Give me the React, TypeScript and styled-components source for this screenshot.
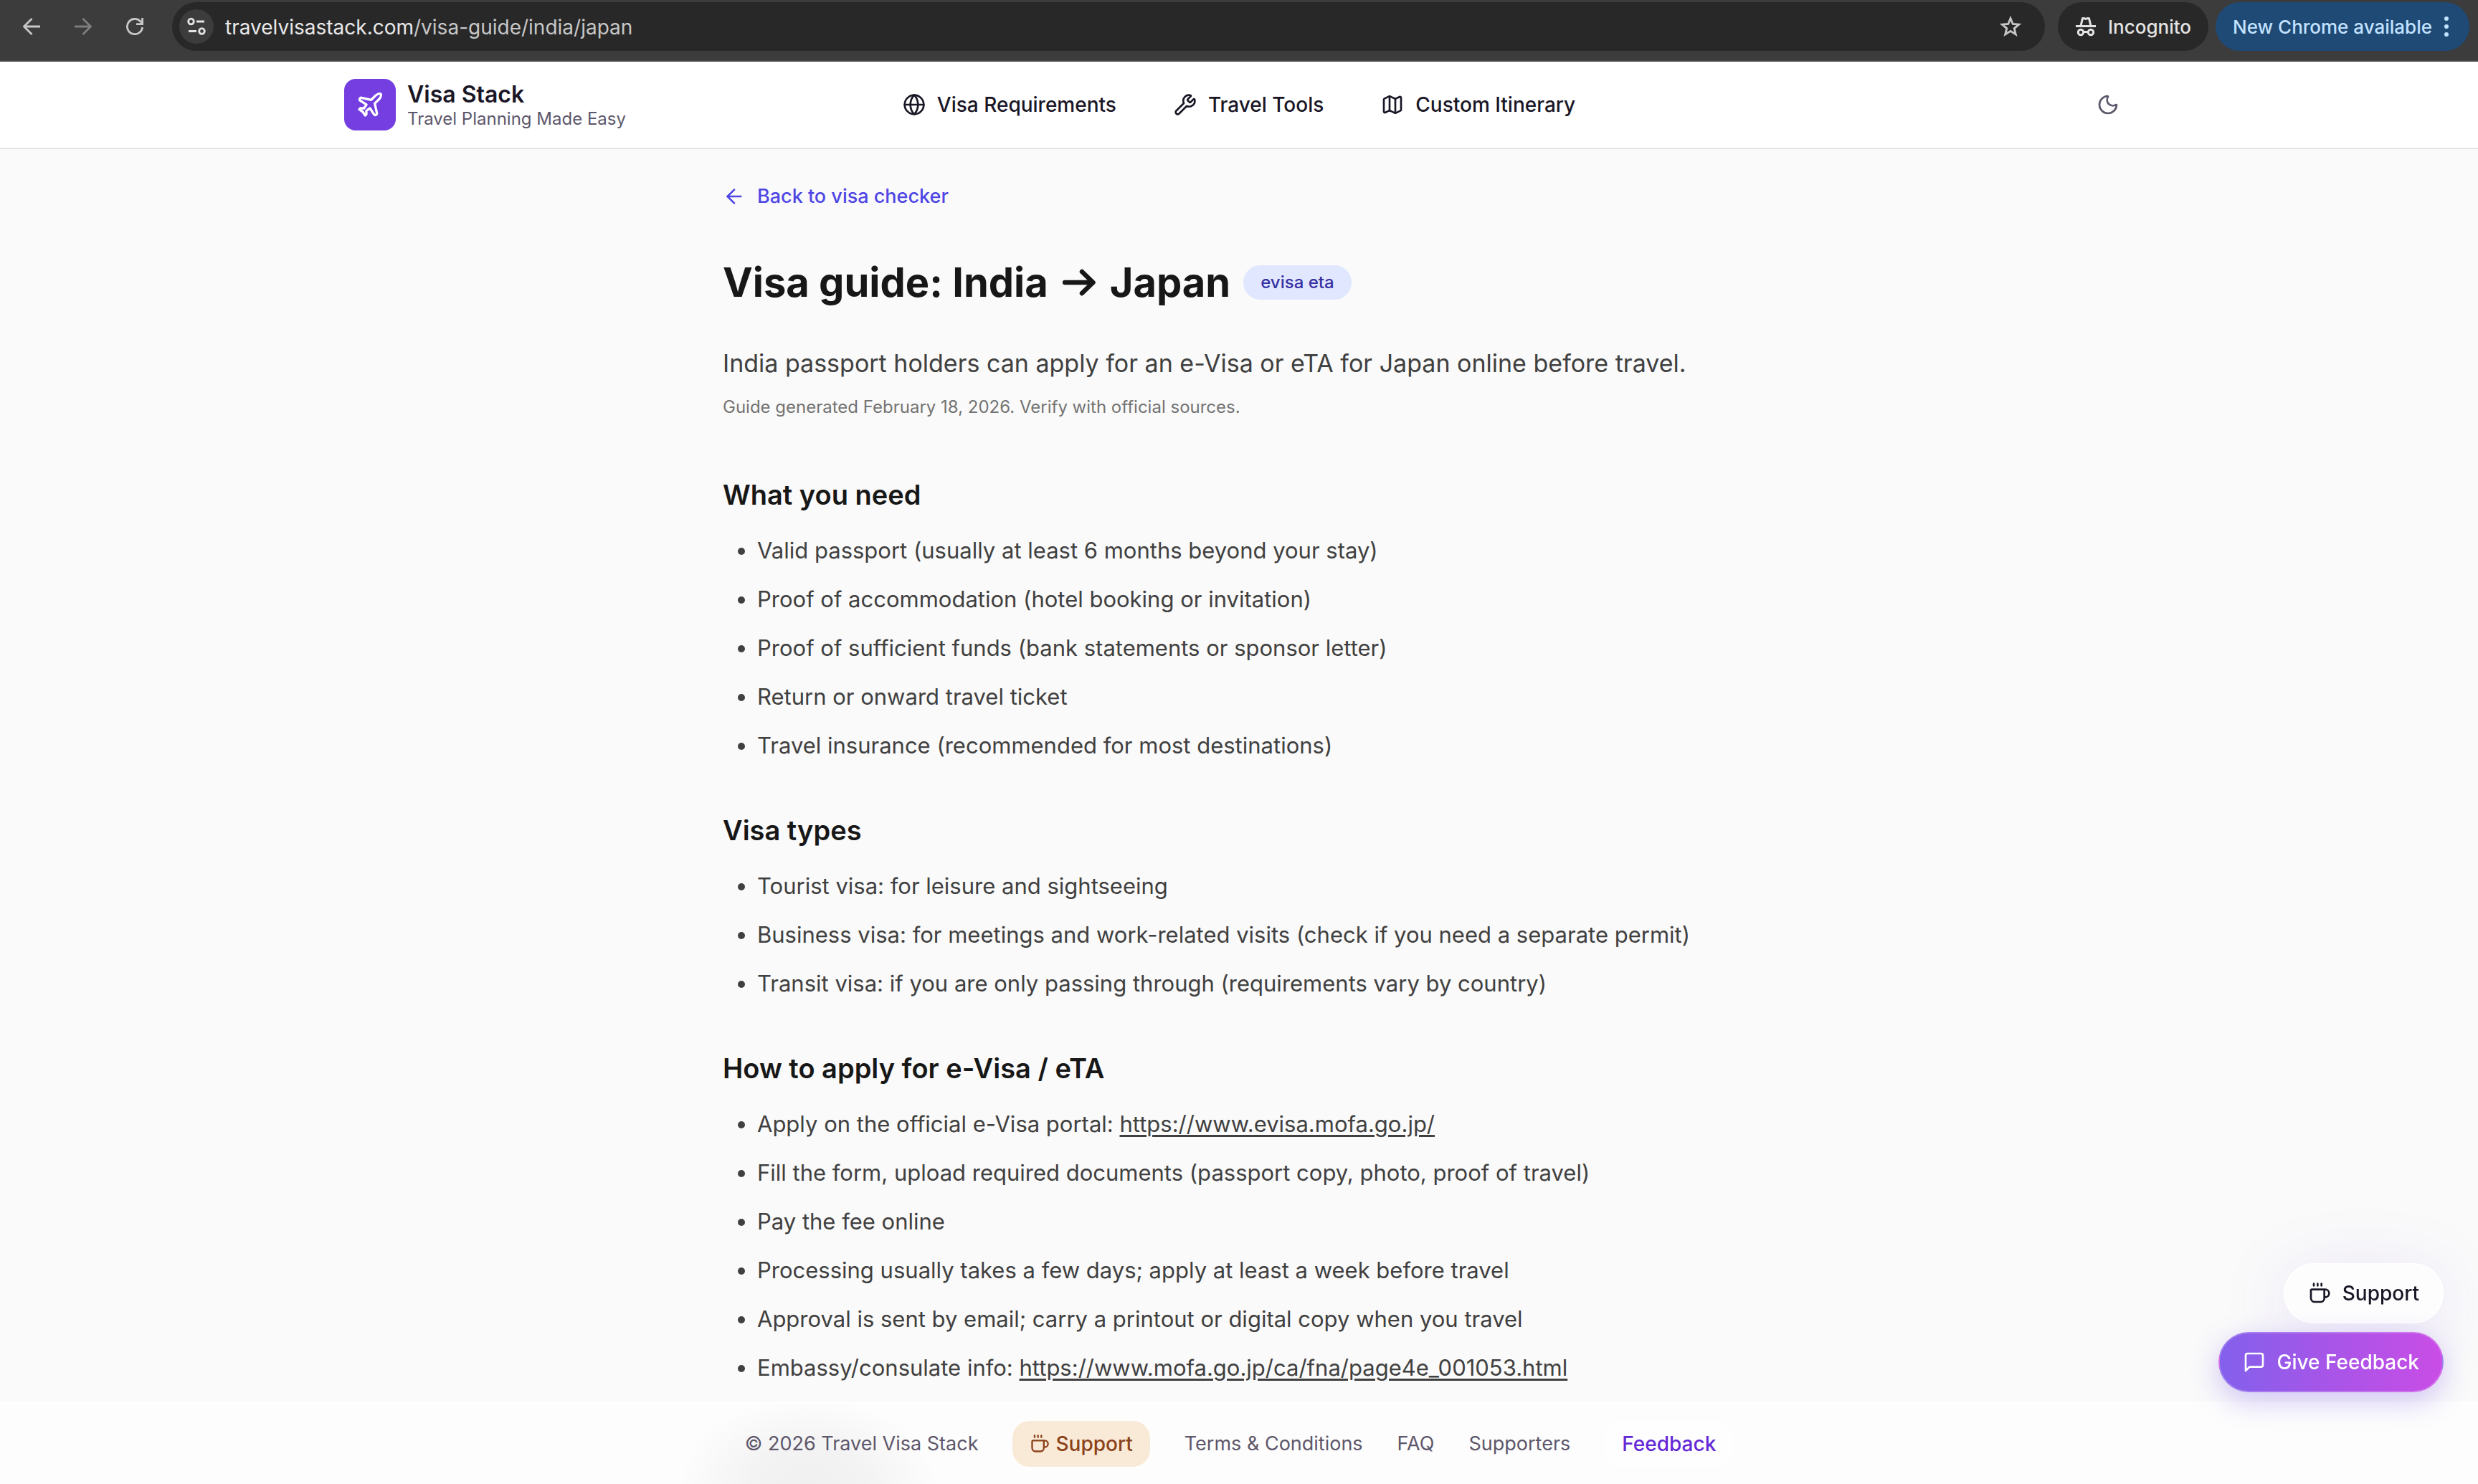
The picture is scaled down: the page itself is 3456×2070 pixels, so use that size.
import React from "react";
import styled, { createGlobalStyle } from "styled-components";
import { ArrowLeft, Coffee, Globe, Map, Moon, Plane, Wrench } from "lucide-react";

const Global = createGlobalStyle`
  *, *::before, *::after { box-sizing: border-box; }
  body { margin: 0; background: #fafafa; color: #171717; font-family: Inter, "Liberation Sans", sans-serif; }
  a { color: inherit; text-decoration: none; }
  button { font: inherit; border: 0; background: none; padding: 0; color: inherit; cursor: pointer; }
  svg { flex: none; display: block; }
`;

const Page = styled.div`
  min-height: 100vh;
  display: flex;
  flex-direction: column;
`;

const BrowserBar = styled.div`
  display: flex;
  align-items: center;
  height: 86px;
  padding: 4px 12px 14px 16px;
  background: #3c3c3c;
  border-bottom: 2px solid #474546;
`;

const BarButton = styled.button<{ $dim?: boolean }>`
  display: grid;
  place-items: center;
  width: 56px;
  height: 56px;
  margin-right: 16px;
  color: ${(p) => (p.$dim ? "#7d7d7d" : "#c7c7c7")};
`;

const AddressBar = styled.div`
  flex: 1;
  display: flex;
  align-items: center;
  height: 68px;
  margin-left: 8px;
  padding: 0 28px 0 10px;
  border-radius: 34px;
  background: #282828;
`;

const SiteInfo = styled.button`
  display: grid;
  place-items: center;
  width: 48px;
  height: 48px;
  border-radius: 24px;
  background: #3c3c3c;
  color: #e3e3e3;
`;

const AddressText = styled.span`
  flex: 1;
  margin-left: 16px;
  padding-top: 2px;
  font-size: 28px;
  line-height: 40px;
  color: #c7c7c7;
  b { font-weight: 400; color: #e8e8e8; }
`;

const Star = styled.button`
  color: #c7c7c7;
  padding: 4px;
`;

const Chip = styled.button<{ $update?: boolean }>`
  display: flex;
  align-items: center;
  gap: 16px;
  height: 68px;
  margin-left: ${(p) => (p.$update ? 10 : 18)}px;
  padding: ${(p) => (p.$update ? "0 28px 0 24px" : "0 24px")};
  border-radius: 34px;
  font-size: 26px;
  font-weight: 500;
  background: ${(p) => (p.$update ? "#1f4a75" : "#282828")};
  color: ${(p) => (p.$update ? "#c2e2ff" : "#e3e3e3")};
`;

const Header = styled.header`
  background: #fff;
  border-bottom: 2px solid #e5e5e5;
`;

const HeaderInner = styled.div`
  display: flex;
  align-items: center;
  max-width: 2560px;
  height: 120px;
  margin: 0 auto;
  padding: 0 32px;
`;

const Side = styled.div<{ $end?: boolean }>`
  flex: 1;
  display: flex;
  justify-content: ${(p) => (p.$end ? "flex-end" : "flex-start")};
`;

const Brand = styled.a`
  display: flex;
  align-items: center;
  gap: 16px;
`;

const LogoBox = styled.span`
  display: grid;
  place-items: center;
  width: 72px;
  height: 72px;
  border-radius: 16px;
  background: #743ee0;
  color: #fff;
`;

const BrandName = styled.strong`
  display: block;
  padding-top: 4px;
  font-size: 32px;
  line-height: 36px;
  font-weight: 600;
  color: #1a1626;
`;

const Tagline = styled.span`
  display: block;
  font-size: 24px;
  line-height: 32px;
  color: #5d576b;
`;

const Nav = styled.nav`
  display: flex;
  gap: 80px;
`;

const NavLink = styled.a`
  display: flex;
  align-items: center;
  gap: 16px;
  font-size: 28px;
  line-height: 40px;
  font-weight: 500;
  color: #1a1626;
`;

const ThemeButton = styled.button`
  display: grid;
  place-items: center;
  width: 72px;
  height: 72px;
  color: #5d576b;
`;

const Main = styled.main`
  width: 100%;
  max-width: 1536px;
  margin: 0 auto;
  padding: 46px 48px 0;
`;

const BackLink = styled.a`
  display: inline-flex;
  align-items: center;
  gap: 16px;
  font-size: 27px;
  line-height: 40px;
  font-weight: 500;
  color: #4f46e5;
`;

const TitleRow = styled.div`
  display: flex;
  align-items: center;
  gap: 18px;
  margin-top: 64px;
`;

const Title = styled.h1`
  display: flex;
  align-items: center;
  gap: 20px;
  margin: 0;
  font-size: 56px;
  line-height: 72px;
  font-weight: 700;
`;

const Pill = styled.span`
  padding: 8px 24px;
  border-radius: 24px;
  background: #e0e7ff;
  color: #3730a3;
  font-size: 24px;
  line-height: 32px;
  font-weight: 500;
`;

const Lead = styled.p`
  margin: 48px 0 16px;
  font-size: 34px;
  line-height: 58px;
  color: #404040;
`;

const Meta = styled.p`
  margin: 0 0 78px;
  font-size: 24px;
  line-height: 32px;
  color: #737373;
`;

const Section = styled.section`
  & + & { margin-top: 64px; }
`;

const SectionTitle = styled.h2`
  margin: 0 0 24px;
  font-size: 38px;
  line-height: 56px;
  font-weight: 600;
`;

const List = styled.ul`
  display: flex;
  flex-direction: column;
  gap: 16px;
  margin: 0;
  padding-left: 48px;
  font-size: 31px;
  line-height: 52px;
  color: #404040;
  a { text-decoration: underline; text-decoration-thickness: 3px; text-underline-offset: 4px; }
`;

const Footer = styled.footer`
  position: sticky;
  bottom: 0;
  display: flex;
  justify-content: center;
  align-items: center;
  gap: 48px;
  margin-top: auto;
  padding: 24px;
  border-top: 2px solid #fff;
  background: radial-gradient(ellipse 180px 120px at calc(50% - 600px) 100%, #f0f0f0, #f3f3f3 45%, #fdfdfd) #fdfdfd;
  font-size: 27px;
  line-height: 40px;
  color: #5d576b;
`;

const FooterChip = styled.a<{ $accent?: boolean }>`
  display: flex;
  align-items: center;
  gap: 8px;
  padding: 12px 24px;
  border-radius: 24px;
  font-size: 28px;
  font-weight: 500;
  background: ${(p) => (p.$accent ? "#f9ead8" : "#fefefe")};
  color: ${(p) => (p.$accent ? "#8b4218" : "#6429d6")};
`;

const Floating = styled.div`
  position: fixed;
  right: 48px;
  bottom: 128px;
  display: flex;
  flex-direction: column;
  align-items: flex-end;
  gap: 12px;
`;

const FloatButton = styled.button<{ $primary?: boolean }>`
  display: flex;
  align-items: center;
  gap: 16px;
  height: 84px;
  padding: 0 32px;
  border: 2px solid ${(p) => (p.$primary ? "rgba(255,255,255,0.2)" : "#fff")};
  border-radius: 42px;
  font-size: 28px;
  font-weight: 500;
  color: ${(p) => (p.$primary ? "#fff" : "#1a1626")};
  background: ${(p) => (p.$primary ? "linear-gradient(90deg, #8360ec, #a855e8 50%, #c94de6)" : "#fdfdfd")};
  box-shadow: ${(p) => (p.$primary ? "0 12px 40px rgba(110, 70, 230, 0.3)" : "0 16px 100px rgba(110, 70, 220, 0.14)")};
`;

const BarArrow = ({ forward }: { forward?: boolean }) => (
  <svg width="24" height="24" viewBox="0 0 24 24" fill="none" stroke="currentColor" strokeWidth="2.800">
    {forward ? <path d="M0 12h22M11.500 1l11 11-11 11" /> : <path d="M24 12H2M12.500 1l-11 11 11 11" />}
  </svg>
);

const TitleArrow = () => (
  <svg width="46" height="38" viewBox="0 0 46 38" fill="none" stroke="currentColor" strokeWidth="6.500" strokeLinecap="round" strokeLinejoin="round">
    <path d="M3 19h39M27 4l15.500 15L27 34" />
  </svg>
);

const Tune = () => (
  <svg width="26" height="26" viewBox="0 0 26 26" fill="none" stroke="currentColor" strokeWidth="2.800">
    <circle cx="5.500" cy="6" r="3.800" />
    <path d="M13 6h11M2 19.500h11" />
    <circle cx="20.500" cy="19.500" r="3.800" />
  </svg>
);

const Reload = () => (
  <svg width="24" height="24" viewBox="0 0 24 24" fill="none" stroke="currentColor" strokeWidth="2.800">
    <path d="M22.600 13A10.600 10.600 0 1 1 19.500 4.500L22 7" />
    <path d="M22.600 0v8.600H14" />
  </svg>
);

const StarIcon = () => (
  <svg width="32" height="32" viewBox="0 0 32 32" fill="none" stroke="currentColor" strokeWidth="2.800">
    <path d="M16 4.500l3.200 8 8.600.6-6.600 5.500 2.100 8.400L16 22.400 8.700 27l2.100-8.400-6.600-5.500 8.600-.6z" />
  </svg>
);

const Incognito = () => (
  <svg width="30" height="32" viewBox="0 0 30 32" fill="none" stroke="currentColor" strokeWidth="3">
    <path d="M1 15.500h28" />
    <path d="M8 15l2.500-10.300q2-.5 4.500.8 2.500-1.300 4.500-.8L22 15" />
    <circle cx="8" cy="24" r="3.700" />
    <circle cx="22" cy="24" r="3.700" />
    <path d="M11.500 23.500h7" />
  </svg>
);

const Dots = () => (
  <svg width="8" height="32" viewBox="0 0 8 32" fill="currentColor">
    <circle cx="4" cy="5" r="3" />
    <circle cx="4" cy="16" r="3" />
    <circle cx="4" cy="27" r="3" />
  </svg>
);

const Message = () => (
  <svg width="32" height="32" viewBox="0 0 24 24" fill="none" stroke="currentColor" strokeWidth="2" strokeLinecap="round" strokeLinejoin="round">
    <path d="M21 15a2 2 0 0 1-2 2H7l-4 4V5a2 2 0 0 1 2-2h14a2 2 0 0 1 2 2z" />
  </svg>
);

const sections: { title: string; items: { text: string; url?: string }[] }[] = [
  {
    title: "What you need",
    items: [
      { text: "Valid passport (usually at least 6 months beyond your stay)" },
      { text: "Proof of accommodation (hotel booking or invitation)" },
      { text: "Proof of sufficient funds (bank statements or sponsor letter)" },
      { text: "Return or onward travel ticket" },
      { text: "Travel insurance (recommended for most destinations)" },
    ],
  },
  {
    title: "Visa types",
    items: [
      { text: "Tourist visa: for leisure and sightseeing" },
      { text: "Business visa: for meetings and work-related visits (check if you need a separate permit)" },
      { text: "Transit visa: if you are only passing through (requirements vary by country)" },
    ],
  },
  {
    title: "How to apply for e-Visa / eTA",
    items: [
      { text: "Apply on the official e-Visa portal: ", url: "https://www.evisa.mofa.go.jp/" },
      { text: "Fill the form, upload required documents (passport copy, photo, proof of travel)" },
      { text: "Pay the fee online" },
      { text: "Processing usually takes a few days; apply at least a week before travel" },
      { text: "Approval is sent by email; carry a printout or digital copy when you travel" },
      { text: "Embassy/consulate info: ", url: "https://www.mofa.go.jp/ca/fna/page4e_001053.html" },
    ],
  },
];

export default function App() {
  return (
    <Page>
      <Global />
      <BrowserBar>
        <BarButton aria-label="Back"><BarArrow /></BarButton>
        <BarButton $dim aria-label="Forward"><BarArrow forward /></BarButton>
        <BarButton aria-label="Reload"><Reload /></BarButton>
        <AddressBar>
          <SiteInfo aria-label="Site information"><Tune /></SiteInfo>
          <AddressText><b>travelvisastack.com</b>/visa-guide/india/japan</AddressText>
          <Star aria-label="Bookmark"><StarIcon /></Star>
        </AddressBar>
        <Chip><Incognito />Incognito</Chip>
        <Chip $update>New Chrome available<Dots /></Chip>
      </BrowserBar>
      <Header>
        <HeaderInner>
          <Side>
            <Brand href="#">
              <LogoBox><Plane size={40} /></LogoBox>
              <span>
                <BrandName>Visa Stack</BrandName>
                <Tagline>Travel Planning Made Easy</Tagline>
              </span>
            </Brand>
          </Side>
          <Nav>
            <NavLink href="#"><Globe size={32} />Visa Requirements</NavLink>
            <NavLink href="#"><Wrench size={32} />Travel Tools</NavLink>
            <NavLink href="#"><Map size={32} />Custom Itinerary</NavLink>
          </Nav>
          <Side $end>
            <ThemeButton aria-label="Toggle theme"><Moon size={32} /></ThemeButton>
          </Side>
        </HeaderInner>
      </Header>
      <Main>
        <BackLink href="#"><ArrowLeft size={32} />Back to visa checker</BackLink>
        <TitleRow>
          <Title>Visa guide: India <TitleArrow /> Japan</Title>
          <Pill>evisa eta</Pill>
        </TitleRow>
        <Lead>India passport holders can apply for an e-Visa or eTA for Japan online before travel.</Lead>
        <Meta>Guide generated February 18, 2026. Verify with official sources.</Meta>
        {sections.map((s) => (
          <Section key={s.title}>
            <SectionTitle>{s.title}</SectionTitle>
            <List>
              {s.items.map((i) => (
                <li key={i.text}>{i.text}{i.url && <a href={i.url}>{i.url}</a>}</li>
              ))}
            </List>
          </Section>
        ))}
      </Main>
      <Footer>
        <span>© 2026 Travel Visa Stack</span>
        <FooterChip $accent href="#"><Coffee size={28} />Support</FooterChip>
        <a href="#">Terms &amp; Conditions</a>
        <a href="#">FAQ</a>
        <a href="#">Supporters</a>
        <FooterChip href="#">Feedback</FooterChip>
      </Footer>
      <Floating>
        <FloatButton><Coffee size={32} />Support</FloatButton>
        <FloatButton $primary><Message />Give Feedback</FloatButton>
      </Floating>
    </Page>
  );
}
